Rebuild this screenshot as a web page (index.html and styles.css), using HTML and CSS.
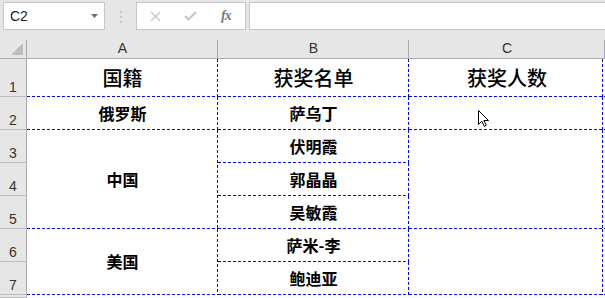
FILE: index.html
```html
<!DOCTYPE html>
<html lang="zh">
<head>
<meta charset="utf-8">
<title>Sheet</title>
<link rel="stylesheet" href="styles.css">
</head>
<body>
<div class="app">
  <div class="fbar">
    <div class="namebox">
      <span class="ref">C2</span>
      <svg class="caret" width="7" height="4" viewBox="0 0 7 4"><path d="M0 0H7L3.5 4Z" fill="#707070"/></svg>
    </div>
    <svg class="grip" width="3" height="12" viewBox="0 0 3 12"><rect x="0" y="0" width="2" height="2" fill="#c4c4c4"/><rect x="0" y="5" width="2" height="2" fill="#c4c4c4"/><rect x="0" y="10" width="2" height="2" fill="#c4c4c4"/></svg>
    <div class="btns">
      <svg width="11" height="11" viewBox="0 0 11 11"><path d="M1 1L10 10M10 1L1 10" stroke="#c4c4c4" stroke-width="1.3" fill="none"/></svg>
      <svg width="13" height="10" viewBox="0 0 13 10"><path d="M1 5L4.5 8.5L12 1" stroke="#c4c4c4" stroke-width="2" fill="none"/></svg>
      <span class="fx">fx</span>
    </div>
    <div class="formula"></div>
  </div>
  <div class="sheet">
    <div class="corner"><svg width="12" height="12" viewBox="0 0 12 12"><path d="M12 0V12H0Z" fill="#bdbdbd"/></svg></div>
    <div class="colhead">A</div>
    <div class="colhead">B</div>
    <div class="colhead">C</div>

    <div class="rowhead">1</div>
    <div class="cell head">国籍</div>
    <div class="cell head">获奖名单</div>
    <div class="cell head last">获奖人数</div>

    <div class="rowhead">2</div>
    <div class="cell">俄罗斯</div>
    <div class="cell">萨乌丁</div>
    <div class="cell last"></div>

    <div class="rowhead">3</div>
    <div class="cell span3">中国</div>
    <div class="cell">伏明霞</div>
    <div class="cell last span3"></div>

    <div class="rowhead">4</div>
    <div class="cell">郭晶晶</div>

    <div class="rowhead">5</div>
    <div class="cell">吴敏霞</div>

    <div class="rowhead">6</div>
    <div class="cell span2">美国</div>
    <div class="cell">萨米-李</div>
    <div class="cell last span2"></div>

    <div class="rowhead">7</div>
    <div class="cell">鲍迪亚</div>

    <div class="rowhead"></div>
  </div>
  <svg class="pointer" width="13" height="17" viewBox="0 0 13 17"><path d="M0.5 0.5V14.5L3.8 11.3L6.3 16.3L8.3 15.3L5.9 10.5H10.5Z" fill="#fff" stroke="#000" stroke-width="1" stroke-linejoin="miter"/></svg>
</div>
</body>
</html>
```
FILE: styles.css
```css
html, body {
  margin: 0;
  padding: 0;
  background: #fff;
}
.app {
  position: relative;
  width: 605px;
  height: 298px;
  overflow: hidden;
  background: #e6e6e6;
  font-family: "Liberation Sans", Arial, sans-serif;
}
.fbar {
  height: 31px;
  box-sizing: border-box;
  padding: 2px 0 0 3px;
  display: flex;
  align-items: flex-start;
}
.namebox {
  width: 102px;
  height: 28px;
  box-sizing: border-box;
  background: #fff;
  border: 1px solid #c6c6c6;
  display: flex;
  align-items: center;
  justify-content: space-between;
  padding: 0 6px 0 6px;
}
.ref {
  font-size: 14px;
  color: #222;
}
.caret {
  display: block;
}
.grip {
  display: block;
  margin: 9px 13px 0 15px;
}
.btns {
  width: 110px;
  height: 28px;
  box-sizing: border-box;
  background: #fff;
  border: 1px solid #c6c6c6;
  display: flex;
  align-items: center;
  padding: 0 11px 0 13px;
  gap: 23px;
}
.btns svg {
  display: block;
}
.fx {
  font-family: "Liberation Serif", "Times New Roman", serif;
  font-style: italic;
  font-weight: bold;
  font-size: 14px;
  color: #7a7a7a;
  letter-spacing: -1px;
  margin-left: 1px;
}
.formula {
  flex: 1;
  margin-left: 3px;
  height: 28px;
  box-sizing: border-box;
  background: #fff;
  border: 1px solid #c6c6c6;
  border-right: none;
}
.sheet {
  display: grid;
  grid-template-columns: 27px 191px 191px 196px;
  grid-template-rows: 28px 38px repeat(6, 33px) 1fr;
  height: 267px;
  background: #fff;
}
.corner {
  background: #e6e6e6;
  border-bottom: 1px solid #ababab;
  box-sizing: border-box;
  display: flex;
  align-items: flex-end;
  justify-content: flex-end;
  padding: 0 4px 3px 0;
  background-image: linear-gradient(#ababab, #ababab);
  background-size: 1px 18px;
  background-position: right bottom;
  background-repeat: no-repeat;
}
.corner svg {
  display: block;
}
.colhead {
  background-color: #e6e6e6;
  border-bottom: 1px solid #ababab;
  box-sizing: border-box;
  display: flex;
  align-items: flex-end;
  justify-content: center;
  padding-bottom: 2px;
  font-size: 14px;
  color: #333;
  background-image: linear-gradient(#ababab, #ababab);
  background-size: 1px 18px;
  background-position: right bottom;
  background-repeat: no-repeat;
}
.rowhead {
  grid-column: 1;
  background: #e6e6e6;
  border-right: 1px solid #ababab;
  border-bottom: 1px solid #bdbdbd;
  box-sizing: border-box;
  display: flex;
  align-items: flex-end;
  justify-content: center;
  padding-bottom: 1px;
  font-size: 14px;
  line-height: 16px;
  color: #333;
}
.cell {
  display: flex;
  align-items: center;
  justify-content: center;
  padding-bottom: 2px;
  box-sizing: border-box;
  font-family: "Noto Sans CJK SC", "Noto Sans CJK JP", sans-serif;
  font-weight: 700;
  font-size: 16px;
  color: #000;
  background-image:
    repeating-linear-gradient(to right, #0000ff 0 3px, transparent 3px 5px),
    repeating-linear-gradient(to bottom, #0000ff 0 3px, transparent 3px 5px);
  background-size: 100% 1px, 1px 100%;
  background-position: left bottom, right top;
  background-repeat: no-repeat;
}
.cell.last {
  background-position: left bottom, calc(100% - 2px) top;
}
.head {
  font-size: 20px;
  font-weight: 500;
  padding-bottom: 2px;
}
.span3 {
  grid-row: span 3;
}
.span2 {
  grid-row: span 2;
}
.pointer {
  position: absolute;
  left: 478px;
  top: 110px;
}
```
